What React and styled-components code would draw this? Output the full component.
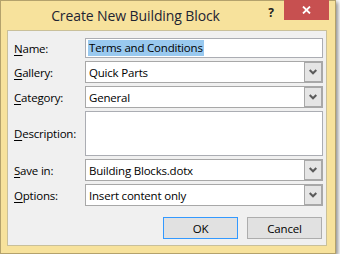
import styled, { createGlobalStyle } from "styled-components";

const GlobalStyle = createGlobalStyle`
  html, body {
    margin: 0;
    padding: 0;
    background: #ffffff;
  }
  body {
    font-family: "Open Sans", "Noto Sans", sans-serif;
  }
`;

const Window = styled.div`
  box-sizing: border-box;
  width: 336px;
  height: 254px;
  border: 1px solid #b4a26c;
  background: #f7e29c;
  box-shadow: 2px 2px 4px rgba(0, 0, 0, 0.45);
  display: flex;
  flex-direction: column;
  padding: 0 8px 7px 6px;
`;

const TitleBar = styled.div`
  height: 29px;
  display: flex;
  align-items: flex-start;
  margin-right: -2px;
`;

const Title = styled.div`
  flex: 1;
  text-align: center;
  font-size: 14px;
  letter-spacing: -0.1px;
  line-height: 29px;
  color: #1e2433;
  padding-left: 6px;
`;

const HelpButton = styled.div`
  width: 26px;
  height: 20px;
  margin-top: 2px;
  font-size: 12px;
  font-weight: 700;
  color: #222222;
  text-align: center;
  line-height: 20px;
`;

const CloseButton = styled.div`
  width: 45px;
  height: 20px;
  margin-top: -1px;
  background: #c75050;
  display: flex;
  align-items: center;
  justify-content: center;
`;

const Client = styled.div`
  flex: 1;
  border: 1px solid #c9c09a;
  background: #f0f0f0;
  padding: 7px 3px 6px 6px;
  display: flex;
  flex-direction: column;
  font-size: 11.5px;
  letter-spacing: -0.2px;
  color: #000000;
`;

const FormGrid = styled.div`
  display: grid;
  grid-template-columns: 71px 238px;
  grid-template-rows: 20px 22px 22px 45px 22px 22px;
  row-gap: 3px;
`;

const Label = styled.div`
  display: flex;
  align-items: center;
  u {
    text-decoration-thickness: 1px;
    text-underline-offset: 2px;
  }
`;

const TextBox = styled.div`
  box-sizing: border-box;
  border: 1px solid #abadb3;
  background: #ffffff;
  display: flex;
  align-items: center;
  padding-left: ${(props) => props.$pad || 3}px;
`;

const Selected = styled.span`
  background: #99c9ef;
  line-height: 16px;
  padding: 0 1px;
`;

const Combo = styled.div`
  box-sizing: border-box;
  border: 1px solid #a8a8a8;
  background: #ffffff;
  display: flex;
  align-items: stretch;
`;

const ComboText = styled.div`
  flex: 1;
  display: flex;
  align-items: center;
  padding-left: 3px;
`;

const DropButton = styled.div`
  box-sizing: border-box;
  width: 18px;
  border: 1px solid #a8a8a8;
  background: #e5e5e5;
  display: flex;
  align-items: center;
  justify-content: center;
`;

const ButtonRow = styled.div`
  display: flex;
  justify-content: flex-end;
  gap: 9px;
  margin-top: 11px;
  padding-right: 1px;
`;

const Button = styled.div`
  box-sizing: border-box;
  width: 75px;
  height: 22px;
  border: 1px solid ${(props) => (props.$default ? "#3399ff" : "#adadad")};
  background: #e1e1e1;
  display: flex;
  align-items: center;
  justify-content: center;
`;

function Chevron() {
  return (
    <svg width="8" height="6" viewBox="0 0 8 6">
      <path d="M0.7 1 L4 4.3 L7.3 1" fill="none" stroke="#5a5a5a" strokeWidth="2" />
    </svg>
  );
}

function Dropdown({ value }) {
  return (
    <Combo>
      <ComboText>{value}</ComboText>
      <DropButton>
        <Chevron />
      </DropButton>
    </Combo>
  );
}

export default function App() {
  return (
    <>
      <GlobalStyle />
      <Window>
        <TitleBar>
          <Title>Create New Building Block</Title>
          <HelpButton>?</HelpButton>
          <CloseButton>
            <svg width="9" height="8" viewBox="0 0 9 8">
              <path d="M1 0.5 L8 7.5 M8 0.5 L1 7.5" stroke="#ffffff" strokeWidth="1.8" />
            </svg>
          </CloseButton>
        </TitleBar>
        <Client>
          <FormGrid>
            <Label>
              <u>N</u>ame:
            </Label>
            <TextBox $pad={2}>
              <Selected>Terms and Conditions</Selected>
            </TextBox>
            <Label>
              <u>G</u>allery:
            </Label>
            <Dropdown value="Quick Parts" />
            <Label>
              <u>C</u>ategory:
            </Label>
            <Dropdown value="General" />
            <Label>
              <u>D</u>escription:
            </Label>
            <TextBox />
            <Label>
              <u>S</u>ave in:
            </Label>
            <Dropdown value="Building Blocks.dotx" />
            <Label>
              <u>O</u>ptions:
            </Label>
            <Dropdown value="Insert content only" />
          </FormGrid>
          <ButtonRow>
            <Button $default>OK</Button>
            <Button>Cancel</Button>
          </ButtonRow>
        </Client>
      </Window>
    </>
  );
}
